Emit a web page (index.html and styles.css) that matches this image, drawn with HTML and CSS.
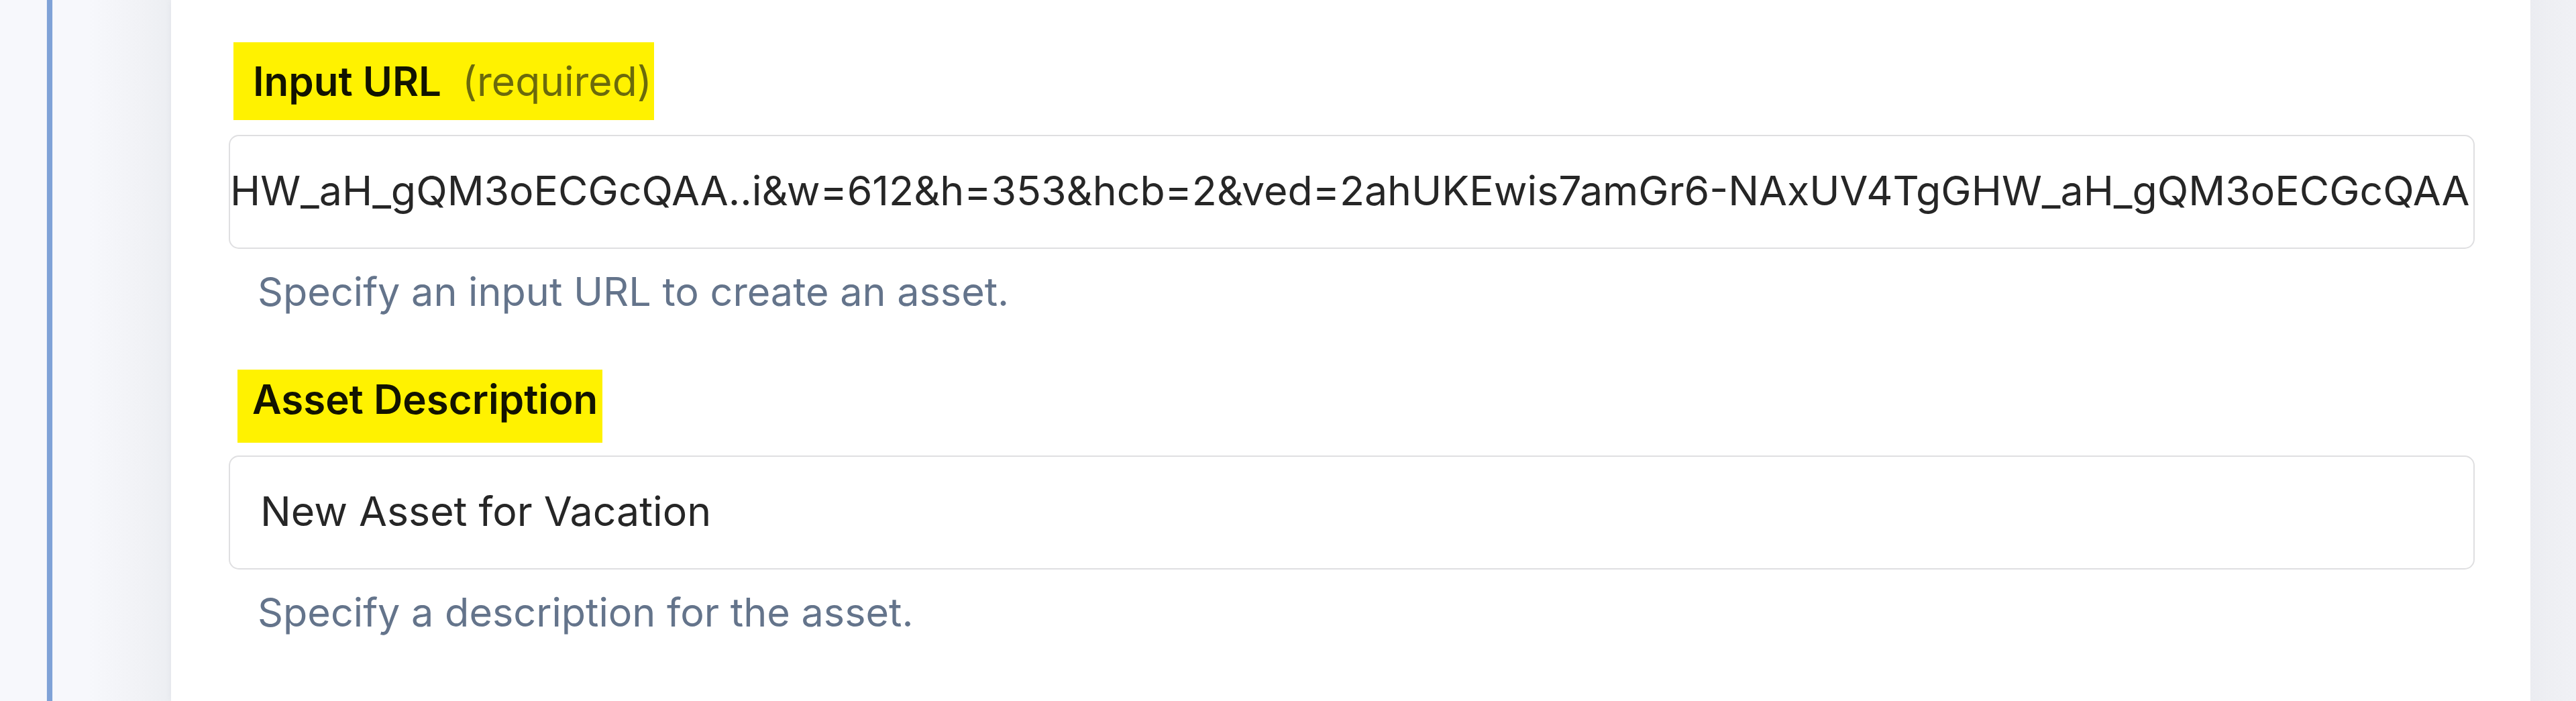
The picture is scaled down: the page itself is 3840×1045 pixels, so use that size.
FILE: index.html
```html
<!DOCTYPE html>
<html lang="en">
<head>
<meta charset="utf-8">
<title>Create Asset</title>
<link rel="stylesheet" href="styles.css">
</head>
<body>
<div class="app">
  <aside class="rail"><div class="rail-line"></div></aside>
  <main class="panel">
    <div class="form">
      <div class="field">
        <div class="label label-url"><span class="label-name">Input URL</span><span class="req">(required)</span></div>
        <div class="input input-url"><span class="input-value">HW_aH_gQM3oECGcQAA..i&amp;w=612&amp;h=353&amp;hcb=2&amp;ved=2ahUKEwis7amGr6-NAxUV4TgGHW_aH_gQM3oECGcQAA</span></div>
        <p class="help">Specify an input URL to create an asset.</p>
      </div>
      <div class="field field-next">
        <div class="label label-desc"><span class="label-name">Asset Description</span></div>
        <div class="input input-desc"><span class="input-value">New Asset for Vacation</span></div>
        <p class="help">Specify a description for the asset.</p>
      </div>
    </div>
  </main>
  <div class="gutter"></div>
</div>
</body>
</html>
```

FILE: styles.css
```css
html, body {
  margin: 0;
  padding: 0;
  height: 100%;
}

body {
  font-family: "Inter", "Noto Sans", sans-serif;
  background: #f7f8fc;
  overflow: hidden;
}

.app {
  display: flex;
  height: 100vh;
}

.rail {
  flex: 0 0 255px;
  display: flex;
  padding-left: 70px;
  box-sizing: border-box;
  background: linear-gradient(90deg, #f7f8fc 0, #f7f8fc 130px, #f1f2f6 210px, #eceef2 255px);
}

.rail-line {
  width: 8px;
  background: #7fa2d7;
  box-shadow: 0 0 1px #a9c0e6;
}

.panel {
  flex: 0 0 3516px;
  background: #ffffff;
  box-shadow: 0 0 10px rgba(30, 40, 70, 0.05);
}

.gutter {
  flex: 1 1 auto;
  background: linear-gradient(90deg, #ebecf1 0, #eeeff3 30px, #f0f1f5 100%);
}

.form {
  display: flex;
  flex-direction: column;
  padding: 63px 83px 0 86px;
}

.field {
  display: flex;
  flex-direction: column;
}

.field-next {
  margin-top: 75px;
}

.label {
  align-self: flex-start;
  background: #fff200;
  font-size: 60px;
  font-weight: 600;
  color: #121300;
  white-space: nowrap;
}

.label-url {
  margin-left: 7px;
  padding: 0 3px 0 29px;
  line-height: 116px;
}

.label-desc {
  margin-left: 13px;
  padding: 0 7px 20px 22px;
  line-height: 89px;
}

.req {
  margin-left: 31px;
  font-size: 60.5px;
  font-weight: 400;
  color: #6b6a0c;
}

.input {
  box-sizing: border-box;
  height: 170px;
  border: 2px solid #dfdfe1;
  border-radius: 15px;
  background: #ffffff;
  display: flex;
  align-items: center;
  overflow: hidden;
  white-space: nowrap;
  font-size: 60.8px;
  color: #262626;
  padding-bottom: 5px;
}

.label-url + .input {
  margin-top: 22px;
}

.label-desc + .input {
  margin-top: 19px;
}

.input-url {
  justify-content: flex-end;
  padding-right: 5px;
}

.input-desc {
  padding-left: 45px;
}

.input-value {
  flex: 0 0 auto;
}

.help {
  margin: 23px 0 0 43px;
  font-size: 59.3px;
  line-height: 82px;
  color: #64748b;
}
```
